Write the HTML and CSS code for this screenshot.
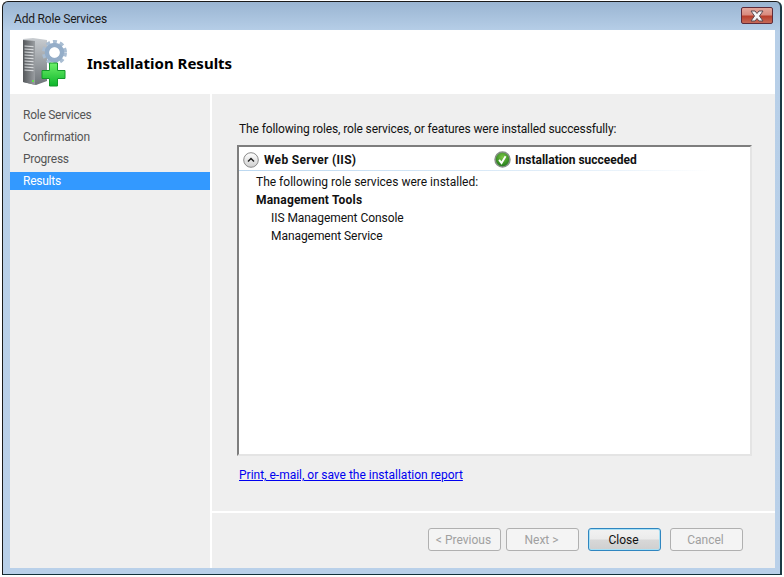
FILE: index.html
```html
<!DOCTYPE html>
<html lang="en">
<head>
<meta charset="utf-8">
<title>Add Role Services</title>
<link rel="stylesheet" href="styles.css">
</head>
<body>
<div class="window">
  <div class="titlebar">
    <span class="title">Add Role Services</span>
    <button class="close-x" aria-label="Close">
      <svg width="20" height="12" viewBox="0 0 20 12"><path d="M4 1h4l2 2.500L12 1h4l-3.500 5 3.500 5h-4l-2-2.500L8 11H4l3.500-5z" fill="#f4f4f6" stroke="#5a4a52" stroke-width="1"/></svg>
    </button>
  </div>
  <div class="client">
    <header class="banner">
      <svg class="banner-icon" width="50" height="50" viewBox="0 0 50 50">
        <defs>
          <linearGradient id="srvFront" x1="0" y1="0" x2="1" y2="0"><stop offset="0" stop-color="#55585b"/><stop offset="1" stop-color="#9a9ea2"/></linearGradient>
          <linearGradient id="srvSide" x1="0" y1="0" x2="0" y2="1"><stop offset="0" stop-color="#c9cdd1"/><stop offset="1" stop-color="#6f7479"/></linearGradient>
          <linearGradient id="plus" x1="0" y1="0" x2="0" y2="1"><stop offset="0" stop-color="#6ff06a"/><stop offset="1" stop-color="#0cb52a"/></linearGradient>
        </defs>
        <path d="M2 2l10-1 14 2v41l-11 4-13-3z" fill="url(#srvSide)"/>
        <path d="M2 3l12 1v44l-12-3z" fill="url(#srvFront)"/>
        <path d="M3.500 9l9 .7M3.500 12l9 .7M3.500 15l9 .7M3.500 18l9 .7M3.500 21l9 .7M3.500 24l9 .7M3.500 27l9 .7M3.500 30l9 .7M3.500 33l9 .7" stroke="#d5d8da" stroke-width="1.200"/>
        <rect x="11" y="43" width="2" height="2" fill="#62e04c"/>
        <g transform="translate(33.500 15.500)">
          <circle r="10.800" fill="none" stroke="#a9bdd2" stroke-width="3.400" stroke-dasharray="4 3"/>
          <circle r="7.500" fill="none" stroke="#94adc8" stroke-width="4.500"/>
          <circle r="5" fill="#fff"/>
        </g>
        <path d="M28.500 26h8v7.500H44v8h-7.500V49h-8v-7.500H21v-8h7.500z" fill="url(#plus)" stroke="#149a2a"/>
      </svg>
      <h1 class="heading">Installation Results</h1>
    </header>
    <div class="body">
      <nav class="steps">
        <a class="step">Role Services</a>
        <a class="step">Confirmation</a>
        <a class="step">Progress</a>
        <a class="step current">Results</a>
      </nav>
      <main class="pane">
        <div class="content">
          <p class="intro">The following roles, role services, or features were installed successfully:</p>
          <section class="results">
            <div class="result-head">
              <div class="result-name">
                <svg width="16" height="16" viewBox="0 0 16 16"><defs><linearGradient id="chev" x1="0" y1="0" x2="0" y2="1"><stop offset="0" stop-color="#fff"/><stop offset="1" stop-color="#cfcfcf"/></linearGradient></defs><circle cx="8" cy="8" r="7.300" fill="url(#chev)" stroke="#8a8a8a"/><path d="M5 9.500l3-3 3 3" fill="none" stroke="#222" stroke-width="1.500"/></svg>
                <strong class="wide">Web Server (IIS)</strong>
              </div>
              <div class="result-status">
                <svg width="17" height="17" viewBox="0 0 16 16"><defs><radialGradient id="ok" cx=".5" cy=".35" r=".7"><stop offset="0" stop-color="#7cc644"/><stop offset="1" stop-color="#146f14"/></radialGradient></defs><circle cx="8" cy="8" r="7" fill="url(#ok)" stroke="#868f86" stroke-width="1.500"/><path d="M4.800 8.300l2.300 3 3.800-6.300" fill="none" stroke="#fff" stroke-width="1.800"/></svg>
                <strong>Installation succeeded</strong>
              </div>
            </div>
            <div class="result-body">
              <div class="line">The following role services were installed:</div>
              <div class="line"><strong class="group">Management Tools</strong></div>
              <div class="line sub">IIS Management Console</div>
              <div class="line sub">Management Service</div>
            </div>
          </section>
          <a class="report" href="#">Print, e-mail, or save the installation report</a>
        </div>
        <footer class="actions">
          <button class="btn" disabled>&lt; Previous</button>
          <button class="btn" disabled>Next &gt;</button>
          <button class="btn primary">Close</button>
          <button class="btn" disabled>Cancel</button>
        </footer>
      </main>
    </div>
  </div>
</div>
</body>
</html>
```
FILE: styles.css
```css
* { box-sizing: border-box; }
html, body { margin: 0; height: 100%; background: #fff; overflow: hidden; }
body {
  padding: 1px 2px 2px 2px;
  font-family: Roboto, "Noto Sans", sans-serif;
  font-size: 12px;
  color: #111;
}
.window {
  width: 780px;
  height: 574px;
  border: 1px solid #1a1a1a;
  border-bottom-color: #12303a;
  border-right: 2px solid #1d3a44;
  border-radius: 6px 6px 0 0;
  background: linear-gradient(180deg, #9ab5d2 0, #b7cfe8 30px, #b9d0e9 100%);
  padding: 0 5px 6px 7px;
  display: flex;
  flex-direction: column;
}
.titlebar {
  height: 28px;
  flex: none;
  display: flex;
  align-items: center;
  justify-content: space-between;
  padding: 6px 2px 0 4px;
}
.title { font-size: 12px; letter-spacing: -0.18px; color: #1c1c1c; }
.close-x {
  width: 32px;
  height: 17px;
  margin-top: -7px;
  padding: 0;
  display: flex;
  align-items: center;
  justify-content: center;
  border: 1px solid #5e2b3a;
  border-radius: 2px;
  background: linear-gradient(180deg, #e4a79c 0, #d98b7e 45%, #b93f2c 55%, #c66a58 100%);
}
.client { flex: 1; display: flex; flex-direction: column; background: #efefef; min-height: 0; }
.banner {
  height: 64px;
  flex: none;
  background: #fff;
  display: flex;
  align-items: center;
  padding: 2px 0 0 11px;
  gap: 16px;
}
.banner-icon { flex: none; margin-top: -2px; }
.heading { margin: 0; font-family: "Noto Sans", sans-serif; font-size: 15px; font-weight: 700; color: #000; }
.body { flex: 1; display: flex; min-height: 0; }
.steps {
  width: 202px;
  flex: none;
  border-right: 2px solid #fff;
  padding-top: 12px;
  display: flex;
  flex-direction: column;
  gap: 4px;
}
.step { display: block; width: 200px; height: 18px; line-height: 18px; padding-left: 13px; letter-spacing: -0.25px; color: #555; }
.step.current { background: #3399ff; color: #fff; }
.pane { flex: 1; display: flex; flex-direction: column; min-width: 0; }
.content { height: 419px; flex: none; padding: 27px 23px 0 25px; border-bottom: 2px solid #fff; }
.intro { margin: 0 0 9px 2px; line-height: 16px; letter-spacing: -0.12px; color: #111; }
.results {
  height: 311px;
  margin-top: -1px;
  background: #fff;
  border-style: solid;
  border-width: 2px;
  border-color: #7e7e7e #e4e4e4 #e4e4e4 #7e7e7e;
}
.result-head {
  height: 24px;
  display: flex;
  align-items: center;
  padding: 2px 0 0 4px;
  border-bottom: 1px solid;
  border-image: linear-gradient(90deg, #bcd8f0, #eaf3fb 75%, #fff 92%) 1;
}
.result-name { width: 251px; display: flex; align-items: center; gap: 5px; }
.result-status { display: flex; align-items: center; gap: 4px; }
.wide { letter-spacing: 0.3px; }
.group { letter-spacing: 0.2px; }
.result-body { padding: 2px 0 0 17px; }
.line { height: 18px; line-height: 18px; }
.sub { padding-left: 15px; letter-spacing: -0.06px; }
.report { display: inline-block; margin: 10px 0 0 2px; line-height: 18px; color: #0000f0; }
.actions {
  flex: 1;
  display: flex;
  justify-content: flex-end;
  padding: 15px 32px 0 0;
  gap: 5px;
  align-items: flex-start;
}
.btn {
  width: 73px;
  height: 23px;
  padding: 0 2px 0 0;
  font: inherit;
  color: #a0a0a0;
  background: #f4f4f4;
  border: 1px solid #b0b0b0;
  border-radius: 3px;
}
.primary {
  margin: 0 4px;
  color: #111;
  border-color: #2f86c0;
  box-shadow: inset 0 0 0 1px #a8e0f5;
  background: linear-gradient(180deg, #f2f2f2 0, #ebebeb 48%, #d8d8d8 52%, #cfcfcf 100%);
}
```
